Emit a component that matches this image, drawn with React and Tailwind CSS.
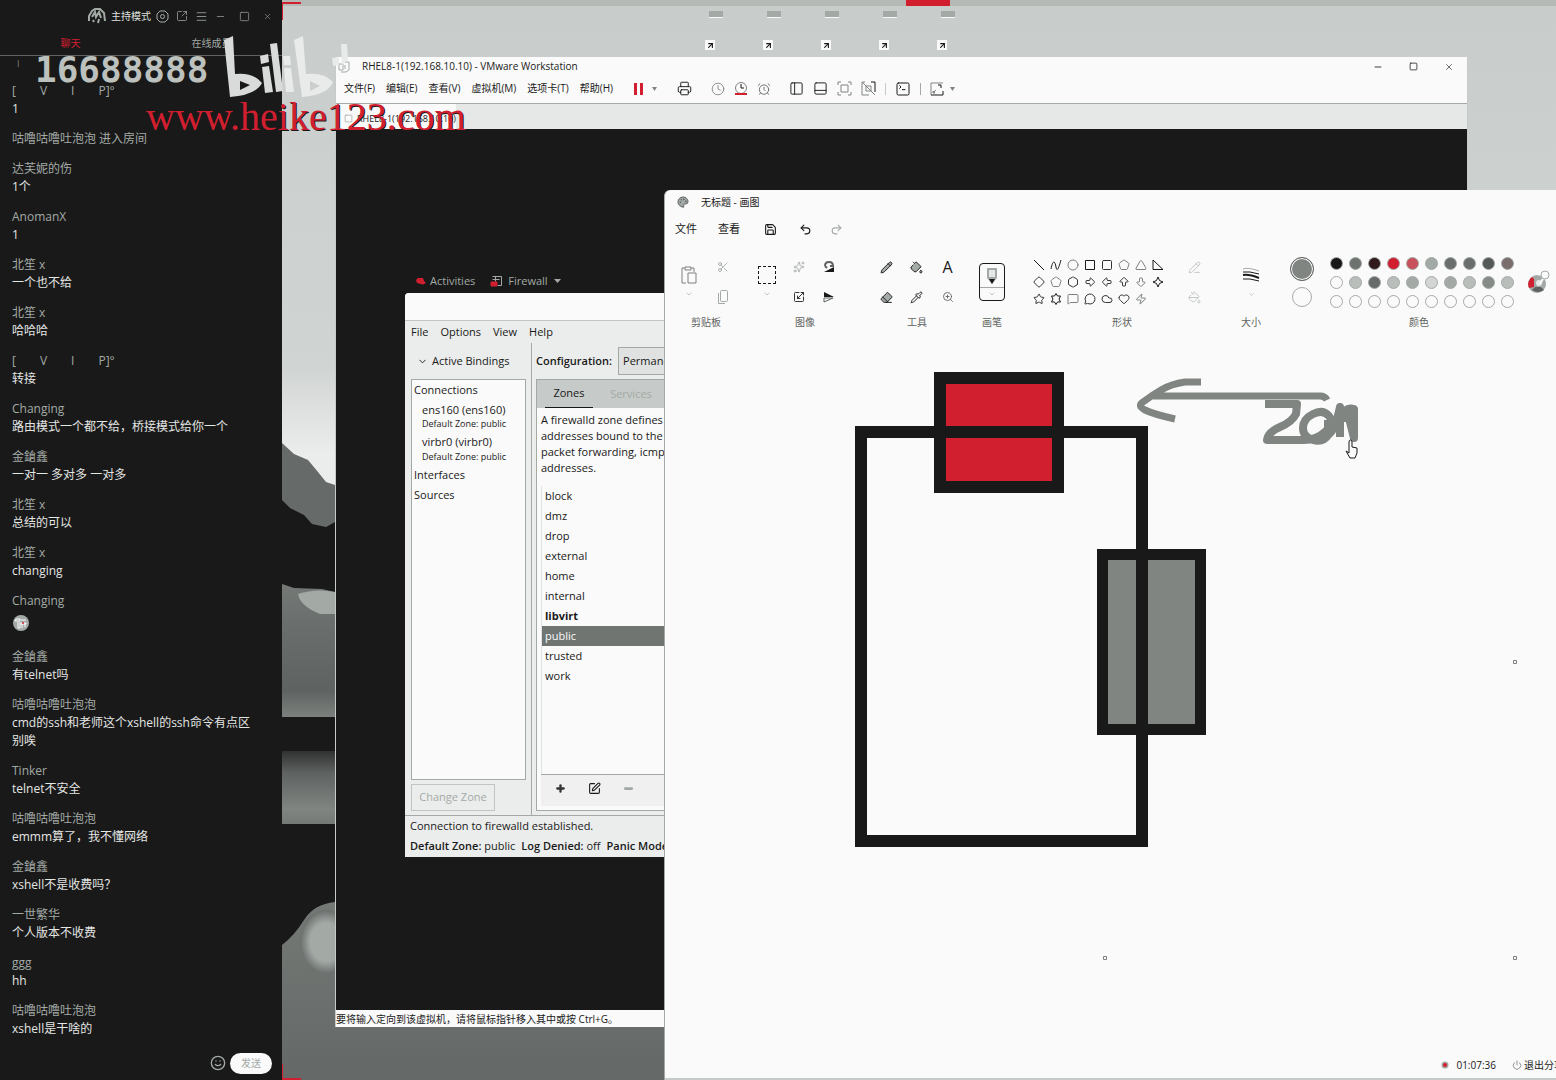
import React from "react";
import {
  SquareArrowOutUpRight, Menu, Minus, Square, X, Smile, Printer, Clock, AlarmClock,
  PanelLeft, PanelBottom, SquareTerminal, ChevronDown, Save, Undo2, Redo2,
  Scissors, Sparkles, Scaling, Pencil, PaintBucket, Eraser,
  Pipette, ZoomIn, Circle, Triangle, Diamond, Pentagon, Hexagon, ArrowBigRight, ArrowBigLeft,
  ArrowBigUp, ArrowBigDown, Star, MessageSquare, MessageCircle, Heart, Zap, Palette, Power,
  PencilLine, Plus, SquarePen, Cloud, ArrowUpRight,
} from "lucide-react";

const messages = [
  { name: "[\u2003\u2003V\u2003\u2003I\u2003\u2003P]°", text: "1" },
  { system: "咕噜咕噜吐泡泡 进入房间" },
  { name: "达芙妮的伤", text: "1个" },
  { name: "AnomanX", text: "1" },
  { name: "北笙 x", text: "一个也不给" },
  { name: "北笙 x", text: "哈哈哈" },
  { name: "[\u2003\u2003V\u2003\u2003I\u2003\u2003P]°", text: "转接" },
  { name: "Changing", text: "路由模式一个都不给，桥接模式给你一个" },
  { name: "金鎗鑫", text: "一对一 多对多 一对多" },
  { name: "北笙 x", text: "总结的可以" },
  { name: "北笙 x", text: "changing" },
  { name: "Changing", emoji: true },
  { name: "金鎗鑫", text: "有telnet吗" },
  { name: "咕噜咕噜吐泡泡", text: "cmd的ssh和老师这个xshell的ssh命令有点区别唉" },
  { name: "Tinker", text: "telnet不安全" },
  { name: "咕噜咕噜吐泡泡", text: "emmm算了，我不懂网络" },
  { name: "金鎗鑫", text: "xshell不是收费吗？" },
  { name: "一世繁华", text: "个人版本不收费" },
  { name: "ggg", text: "hh" },
  { name: "咕噜咕噜吐泡泡", text: "xshell是干啥的" },
];

function Chat() {
  return (
    <aside className="flex w-[282px] shrink-0 flex-col bg-[#191919] text-[#a3aaa6]">
      <header className="flex h-8 shrink-0 items-center gap-[7px] pl-[88px]">
        <svg width="18" height="16" viewBox="0 0 18 16" fill="none" stroke="#a3aaa6" strokeWidth="2">
          <path d="M1 13V8l3-5 3-2 5 0 4 4 1 8M4 9l3-5 1 5 3-5 2 6M5 12l1 2M11 11l-1 4" />
        </svg>
        <span className="-ml-[2px] whitespace-nowrap text-[10px] text-[#dfe1df]">主持模式</span>
        <button aria-label="设置" className="-ml-[2px]">
          <svg width="13" height="13" viewBox="0 0 13 13" fill="none" stroke="#a3aaa6">
            <path d="M4 1h5l3 3v5l-3 3H4L1 9V4z" /><circle cx="6.500" cy="6.500" r="2" />
          </svg>
        </button>
        <button aria-label="弹出"><SquareArrowOutUpRight size={12} strokeWidth={1.5} /></button>
        <button aria-label="菜单"><Menu size={13} strokeWidth={1.5} /></button>
        <button aria-label="最小化"><Minus size={11} strokeWidth={1.5} /></button>
        <button aria-label="最大化" className="ml-[6px]"><Square size={11} strokeWidth={1.5} /></button>
        <button aria-label="关闭" className="ml-[6px]"><X size={9} strokeWidth={1.5} /></button>
      </header>
      <nav className="grid h-6 shrink-0 grid-cols-2 border-b border-[#5e6260] text-[10px]">
        <button className="text-[#d21f30]">聊天</button>
        <button>在线成员</button>
      </nav>
      <div className="flex min-h-0 flex-1 flex-col overflow-hidden pl-3 pr-6 text-xs leading-[18px]">
        <span className="h-[26px] shrink-0 pl-1 text-[8px] leading-3">|</span>
        <ul className="flex flex-col gap-3">
          {messages.map((m, i) => (
            <li key={i}>
              {m.system ? m.system : (
                <>
                  <p className="whitespace-nowrap">{m.name}</p>
                  {m.emoji ? (
                    <div className="flex h-[26px] items-center">
                      <svg width="18" height="16" viewBox="0 0 18 16">
                        <circle cx="9" cy="8" r="8" fill="#a3aaa6" />
                        <path d="M4 4h4v2H3zM9 5h5M5 8h9v1H8v4H6V9M10 9v4M13 9v3" stroke="#fafafa" fill="none" />
                        <circle cx="11" cy="8" r="1" fill="#d21f30" />
                      </svg>
                    </div>
                  ) : <p className="text-[#e4e6e4]">{m.text}</p>}
                </>
              )}
            </li>
          ))}
        </ul>
      </div>
      <footer className="flex h-[34px] shrink-0 items-center justify-end gap-1 pr-[10px]">
        <button aria-label="表情"><Smile size={16} /></button>
        <button className="h-[21px] w-[42px] rounded-full bg-[#fafafa] text-[10px] text-[#a3aaa6]">发送</button>
      </footer>
    </aside>
  );
}

function Wallpaper() {
  return (
    <svg className="absolute inset-0 h-full w-full" viewBox="0 0 1274 1080" preserveAspectRatio="none">
      <defs>
        <linearGradient id="sky" x1="0" y1="0" x2="0" y2="1">
          <stop offset="0" stopColor="#c8ccca" />
          <stop offset="0.34" stopColor="#d0d4d2" />
          <stop offset="0.42" stopColor="#ebedec" />
        </linearGradient>
        <linearGradient id="field" x1="0" y1="0" x2="0" y2="1">
          <stop offset="0" stopColor="#747976" />
          <stop offset="0.3" stopColor="#6a6e6c" />
          <stop offset="0.8" stopColor="#5e6260" />
          <stop offset="1" stopColor="#7c817e" />
        </linearGradient>
        <linearGradient id="band" x1="0" y1="0" x2="0" y2="1">
          <stop offset="0" stopColor="#303231" />
          <stop offset="0.3" stopColor="#5e6260" />
          <stop offset="0.8" stopColor="#808582" />
          <stop offset="1" stopColor="#747976" />
        </linearGradient>
        <radialGradient id="blob">
          <stop offset="0.6" stopColor="#a3aaa6" />
          <stop offset="1" stopColor="#6a6e6c" />
        </radialGradient>
        <linearGradient id="ground" x1="0" y1="0" x2="0" y2="1">
          <stop offset="0" stopColor="#747976" />
          <stop offset="1" stopColor="#646866" />
        </linearGradient>
      </defs>
      <rect width="1274" height="1080" fill="url(#sky)" />
      <path d="M0 443L12 454 26 460 36 472 44 482 53 485V600H0z" fill="#666a68" />
      <path d="M0 500L8 508 22 515 30 524 44 527 53 522V600H0z" fill="#191919" />
      <path d="M0 584L12 588 40 589 53 592V717H0z" fill="url(#field)" />
      <path d="M16 594Q34 588 53 592V614H38Q18 606 16 594z" fill="#a3aaa6" />
      <path d="M0 717H53V751H0z" fill="#191919" />
      <path d="M0 751H53V824H0z" fill="url(#band)" />
      <path d="M0 824H53V950H0z" fill="#191919" />
      <path d="M0 945Q12 936 22 920T53 902V1080H0z" fill="url(#ground)" />
      <ellipse cx="44" cy="942" rx="26" ry="32" fill="url(#blob)" />
      <path d="M53 900H1274V1080H53z" fill="url(#ground)" />
      <rect width="1274" height="6" fill="#b5bab7" />
    </svg>
  );
}

const T = "#191919";
const G = "#a3aaa6";

const vmMenus = ["文件(F)", "编辑(E)", "查看(V)", "虚拟机(M)", "选项卡(T)", "帮助(H)"];
const zones = ["block", "dmz", "drop", "external", "home", "internal", "libvirt", "public", "trusted", "work"];

function Firewall() {
  return (
    <div className="w-[620px] text-[11px] text-[#191919]">
      <div className="flex h-[22px] items-center gap-[15px] pb-[2px] pl-[10px] text-[#a3aaa6]">
        <button className="flex items-center gap-1">
          <svg width="11" height="8" viewBox="0 0 11 8"><path d="M1 3L3 1l5 0 1 3 2 2-3 1.500L2 6z" fill="#d21f30" /></svg>
          Activities
        </button>
        <button className="flex items-center gap-[6px]">
          <svg width="12" height="11" viewBox="0 0 12 11" fill="none" stroke="#a3aaa6">
            <path d="M2.500.500h9v9h-4M2.500 3.500h7M5.500.500v5" /><path d="M1 6h6v4H1z" fill="#d21f30" stroke="#d21f30" />
          </svg>
          Firewall
          <svg width="7" height="4" viewBox="0 0 7 4"><path d="M0 0h7L3.500 4z" fill="#a3aaa6" /></svg>
        </button>
      </div>
      <div className="flex h-[564px] flex-col rounded-t bg-[#ebedec]">
        <div className="h-7 shrink-0 rounded-t border-b border-[#c0c5c2] bg-[#fafafa]" />
        <div className="flex h-[22px] shrink-0 items-center gap-3 pl-[6px]">
          <button>File</button><button>Options</button><button>View</button><button>Help</button>
        </div>
        <div className="flex min-h-0 flex-1">
          <div className="flex w-[127px] shrink-0 flex-col border-r border-[#a3aaa6] pl-[6px] pr-[5px]">
            <button className="flex h-9 shrink-0 items-center gap-1 pl-[6px]"><ChevronDown size={11} />Active Bindings</button>
            <div className="flex-1 border border-[#a3aaa6] bg-[#fafafa] px-[2px]">
              <p className="leading-5">Connections</p>
              <div className="pl-2">
                <p className="pt-[2px] leading-4">ens160 (ens160)</p>
                <p className="text-[9px] leading-3">Default Zone: public</p>
                <p className="pt-[3px] leading-[18px]">virbr0 (virbr0)</p>
                <p className="text-[9px] leading-3">Default Zone: public</p>
              </div>
              <p className="pt-[3px] leading-[18px]">Interfaces</p>
              <p className="leading-[22px]">Sources</p>
            </div>
            <button className="mb-1 mt-1 h-[27px] w-[84px] shrink-0 border border-[#c0c5c2] text-[#a3aaa6]">Change Zone</button>
          </div>
          <div className="flex min-w-0 flex-1 flex-col pl-1">
            <div className="flex h-9 shrink-0 items-center gap-[6px] font-semibold">
              Configuration:
              <button className="h-7 border border-[#a3aaa6] bg-[#dfe2e0] px-1 font-normal">Permanent</button>
            </div>
            <div className="mb-1 flex min-h-0 flex-1 flex-col border border-[#a3aaa6] bg-[#fafafa]">
              <div className="flex h-7 shrink-0 bg-[#c6cac8] pl-2">
                <button className="w-12 border-b border-[#191919]">Zones</button>
                <button className="ml-[14px] w-12 text-[#a3aaa6]">Services</button>
              </div>
              <p className="h-[78px] shrink-0 whitespace-nowrap px-1 pt-1 leading-4">
                A firewalld zone defines the level of trust for network connections, interfaces<br />
                addresses bound to the zone. The zone combines services, ports, protocols<br />
                packet forwarding, icmp filters and rich rules. The zone can be bound to<br />
                addresses.
              </p>
              <ul className="mx-1 min-h-0 flex-1 border-l border-[#dfe2e0]">
                {zones.map((z) => (
                  <li
                    key={z}
                    className={
                      z === "public" ? "h-5 bg-[#707572] px-[3px] leading-5 text-[#fafafa]"
                        : z === "libvirt" ? "h-5 px-[3px] font-bold leading-5" : "h-5 px-[3px] leading-5"
                    }
                  >
                    {z}
                  </li>
                ))}
              </ul>
              <div className="mx-1 mb-1 flex h-8 shrink-0 items-center gap-[22px] border-t border-[#a3aaa6] bg-[#eff0ef] pb-1 pl-[14px]">
                <button aria-label="Add"><Plus size={11} strokeWidth={5} color="#333534" /></button>
                <button aria-label="Edit"><SquarePen size={13} /></button>
                <button aria-label="Remove"><Minus size={11} strokeWidth={6} color={G} /></button>
              </div>
            </div>
          </div>
        </div>
        <div className="h-[42px] shrink-0 whitespace-nowrap border-t border-[#a3aaa6] pl-[5px] leading-5">
          <p>Connection to firewalld established.</p>
          <p className="flex gap-[6px]">
            <span><span className="font-semibold">Default Zone:</span> public</span>
            <span><span className="font-semibold">Log Denied:</span> off</span>
            <span><span className="font-semibold">Panic Mode:</span> disabled</span>
          </p>
        </div>
      </div>
    </div>
  );
}

function VMware() {
  return (
    <section className="absolute bottom-[53px] left-[53px] right-[88px] top-[57px] flex flex-col border-x border-[#c6cac8] bg-[#fafafa] text-[#191919]">
      <div className="flex h-[19px] shrink-0 items-center text-[10px]">
        <svg className="ml-[2px]" width="12" height="12" viewBox="0 0 12 12" fill="none" stroke={G}><path d="M1 3h4v6H1zM5 1h6v8l-3 2-5 0M7 4v4" /></svg>
        <h1 className="ml-3">RHEL8-1(192.168.10.10) - VMware Workstation</h1>
        <div className="ml-auto flex gap-[26px] pr-[13px]">
          <button aria-label="Minimize"><Minus size={10} /></button>
          <button aria-label="Maximize"><Square size={9} /></button>
          <button aria-label="Close"><X size={10} strokeWidth={1.500} /></button>
        </div>
      </div>
      <div className="flex h-[28px] shrink-0 items-center gap-3 border-b border-[#a3aaa6] pb-[2px] pl-2 text-[10px]">
        <nav className="flex gap-[11px] whitespace-nowrap">
          {vmMenus.map((m) => <button key={m}>{m}</button>)}
        </nav>
        <button aria-label="Suspend" className="ml-[9px] flex items-center gap-2">
          <svg width="10" height="12" viewBox="0 0 10 12"><path d="M0 0h3v12H0zM6 0h3v12H6z" fill="#d21f30" /></svg>
          <svg width="5" height="4" viewBox="0 0 5 4"><path d="M0 0h5L2.500 4z" fill="#808582" /></svg>
        </button>
        <div className="ml-2 flex items-center gap-[9px]">
          <button aria-label="Send keys" className="mr-[10px]"><Printer size={15} strokeWidth={1.500} /></button>
          <button aria-label="Take snapshot"><Clock size={14} strokeWidth={1.500} color="#808582" /></button>
          <button aria-label="Revert snapshot">
            <svg width="14" height="15" viewBox="0 0 14 15" fill="none" stroke="#808582"><circle cx="7" cy="7" r="5.500" /><path d="M7 3v4h3" stroke={T} /><path d="M1 13h12" stroke="#d21f30" strokeWidth="2" /></svg>
          </button>
          <button aria-label="Manage snapshots"><AlarmClock size={14} strokeWidth={1.500} color="#5e6260" /></button>
        </div>
        <div className="ml-[6px] flex items-center gap-[9px]">
          <button aria-label="Library"><PanelLeft size={15} strokeWidth={1.500} /></button>
          <button aria-label="Thumbnail bar"><PanelBottom size={15} strokeWidth={1.500} /></button>
          <button aria-label="Full screen">
            <svg width="15" height="15" viewBox="0 0 15 15" fill="none" stroke="#808582"><path d="M1 4V1h3M11 1h3v3M14 11v3h-3M4 14H1v-3M4 4h7v7H4z" /></svg>
          </button>
          <button aria-label="Unity">
            <svg width="15" height="15" viewBox="0 0 15 15" fill="none" stroke="#808582"><path d="M1 4V1h3M1 4v10h7M5 5h5v5H5zM1 1l13 13" /><path d="M10 1h4v10" stroke={T} /></svg>
          </button>
          <span className="h-3 border-l border-[#c6cac8]" />
          <button aria-label="Console"><SquareTerminal size={16} strokeWidth={1.500} /></button>
          <span className="h-3 border-l border-[#a3aaa6]" />
          <button aria-label="Stretch" className="flex items-center gap-[6px]">
            <svg width="14" height="14" viewBox="0 0 14 14" fill="none" stroke="#808582"><path d="M1 13V1h12M3 9l2 2H3zM3 11l3-3" /><path d="M1 13h12V9M8 3h3v3" stroke={T} /></svg>
            <svg width="5" height="4" viewBox="0 0 5 4"><path d="M0 0h5L2.500 4z" fill="#808582" /></svg>
          </button>
        </div>
      </div>
      <div className="flex h-[25px] shrink-0 items-center bg-[#e6e8e7] text-[9px]">
        <button className="flex h-full w-[120px] items-center gap-1 bg-[#fafafa] pl-2 pt-1"><Square size={9} color={G} />RHEL8-1(192.168.10.10)</button>
      </div>
      <div className="min-h-0 flex-1 overflow-hidden bg-[#191919] pl-[69px] pt-[142px]"><Firewall /></div>
      <div className="h-[17px] shrink-0 whitespace-nowrap text-[10px] leading-[18px]">要将输入定向到该虚拟机，请将鼠标指针移入其中或按 Ctrl+G。</div>
    </section>
  );
}

function Group({ label, className, children }) {
  return (
    <div className={className}>
      <div className="flex h-[60px] items-center justify-center">{children}</div>
      <p className="text-center text-[10px] leading-5 text-[#5e6260]">{label}</p>
    </div>
  );
}

function Tool({ icon: Icon, label, color = T, size = 14, fill = "none" }) {
  return (
    <button aria-label={label} className="flex h-[30px] items-center justify-center">
      <Icon size={size} strokeWidth={1.750} color={color} fill={fill} />
    </button>
  );
}

const shapes = [
  null, null, Circle, null, Square, Pentagon, Triangle, null,
  Diamond, Pentagon, Hexagon, ArrowBigRight, ArrowBigLeft, ArrowBigUp, ArrowBigDown, null,
  Star, null, MessageSquare, MessageCircle, Cloud, Heart, Zap,
];

const drawnShapes = {
  0: <path d="M1 1l10 10" />,
  1: <path d="M1 10C3 0 5 2 6 8s3 0 5-7" />,
  3: <path d="M1.500 1.500h9v9h-9z" />,
  7: <path d="M1 1v9.500h10z" />,
  15: <path d="M6 1l1.500 3.500L11 6 7.500 7.500 6 11 4.500 7.500 1 6l3.500-1.500z" />,
  17: <path d="M6 .500l1.500 2.500h3L9 6l1.500 3h-3L6 11.500 4.500 9h-3L3 6 1.500 3h3z" />,
};

function Shape({ i, icon: Icon }) {
  if (!Icon) return <svg width="12" height="12" viewBox="0 0 12 12" fill="none" stroke={T}>{drawnShapes[i]}</svg>;
  const color = [2, 5, 6, 9, 14, 18, 22].includes(i) ? "#7c817e" : "#333534";
  return <Icon size={12} strokeWidth={2} color={color} />;
}

const swatches = [
  "#191919", "#6e7370", "#301a1c", "#d21f30", "#c8525c", "#a3aaa6", "#6a6e6c", "#6a6e6c", "#555957", "#7a6d6c",
  "#fafafa", "#b9beba", "#676b69", "#b9beba", "#a3aaa6", "#d2d5d3", "#a3aaa6", "#b9beba", "#868b88", "#b9beba",
];

function Paint() {
  return (
    <section className="absolute bottom-0 left-[382px] right-0 top-[190px] flex flex-col overflow-hidden rounded-tl-md border-l border-[#a3aaa6] bg-[#fafafa] text-[#191919]">
      <div className="flex h-6 shrink-0 items-center gap-3 pl-3 text-[10px]">
        <Palette size={12} fill={G} color="#5e6260" />
        <h2>无标题 - 画图</h2>
      </div>
      <div className="flex h-[30px] shrink-0 items-center pl-[10px] text-[11px]">
        <button>文件</button>
        <button className="ml-[21px]">查看</button>
        <button aria-label="保存" className="ml-6"><Save size={13} /></button>
        <button aria-label="撤消" className="ml-[22px]"><Undo2 size={13} /></button>
        <button aria-label="重做" className="ml-[18px]"><Redo2 size={13} color={G} /></button>
      </div>
      <div className="flex h-[90px] shrink-0 gap-4 pl-2 pt-2">
        <Group label="剪贴板" className="w-[66px] shrink-0">
          <div className="flex w-full items-center justify-between px-1">
            <button aria-label="粘贴" className="flex w-6 flex-col items-center gap-[6px]">
              <svg width="16" height="18" viewBox="0 0 16 18" fill="none" stroke="#7c817e"><path d="M5 17H1V2h3M10 2h3v4M4 1h6v3H4zM7 7h8v10H7z" /></svg>
              <ChevronDown size={8} color={G} />
            </button>
            <div className="flex w-6 flex-col">
              <Tool icon={Scissors} label="剪切" color={G} size={12} />
              <button aria-label="复制" className="flex h-[30px] items-center justify-center">
                <svg width="10" height="14" viewBox="0 0 10 14" fill="none" stroke={G}><rect x="2.500" y="0.500" width="7" height="11" rx="1" /><path d="M.500 3v10.500H7" /></svg>
              </button>
            </div>
          </div>
        </Group>
        <Group label="图像" className="w-[100px] shrink-0">
          <div className="flex w-full items-center pl-[3px]">
            <button aria-label="选择" className="flex flex-col items-center gap-[6px]">
              <span className="h-[18px] w-[18px] border border-dashed border-[#191919]" /><ChevronDown size={8} color={G} />
            </button>
            <div className="ml-[17px] grid grid-cols-2 gap-x-[18px]">
              <Tool icon={Sparkles} label="删除背景" color={G} size={12} />
              <button aria-label="旋转" className="flex h-[30px] items-center justify-center">
                <svg width="12" height="12" viewBox="0 0 12 12"><path d="M1 11L11 6v5z" fill={T} /><path d="M2 5q0-4 4-4t4 4H7M2 5l2 2" fill="none" stroke="#5e6260" strokeWidth="2" /></svg>
              </button>
              <Tool icon={Scaling} label="调整大小" size={12} />
              <button aria-label="翻转" className="flex h-[30px] items-center justify-center"><svg width="12" height="12" viewBox="0 0 12 12"><path d="M1 1l10 5H1z" fill={T} /><path d="M1 7h9l-9 4z" fill="none" stroke="#5e6260" /></svg></button>
            </div>
          </div>
        </Group>
        <Group label="工具" className="w-[92px] shrink-0">
          <div className="grid w-full grid-cols-3">
            <Tool icon={Pencil} label="铅笔" fill={G} size={13} /><Tool icon={PaintBucket} label="填充" fill={G} size={13} />
            <button aria-label="文本" className="text-center text-base leading-[30px]">A</button>
            <Tool icon={Eraser} label="橡皮擦" fill={G} size={13} /><Tool icon={Pipette} label="取色" size={13} />
            <Tool icon={ZoomIn} label="放大" size={12} color="#5e6260" />
          </div>
        </Group>
        <Group label="画笔" className="w-[26px] shrink-0">
          <button aria-label="画笔" className="flex h-[38px] w-full flex-col items-center rounded border border-[#191919] pt-1">
            <svg width="12" height="17" viewBox="0 0 12 17"><path d="M1 0h10v10l-5 6-5-6z" fill={G} /><path d="M3 2h6v7H3z" fill="#e6e8e7" /><path d="M3 11h6l-3 5z" fill={T} /></svg>
            <span className="mt-[2px] flex w-full justify-center border-t border-[#a3aaa6] pt-[2px]"><ChevronDown size={8} color={G} /></span>
          </button>
        </Group>
        <Group label="形状" className="w-[202px] shrink-0">
          <div className="flex w-full items-center pl-3">
            <div className="grid grid-cols-8 gap-[5px]">
              {shapes.map((s, i) => <button key={i} aria-label={`形状 ${i + 1}`}><Shape i={i} icon={s} /></button>)}
            </div>
            <div className="ml-6 flex flex-col">
              <Tool icon={PencilLine} label="轮廓" color="#c0c5c2" size={13} /><Tool icon={PaintBucket} label="填充" color="#c0c5c2" size={13} />
            </div>
          </div>
        </Group>
        <Group label="大小" className="w-6 shrink-0">
          <button aria-label="大小" className="flex flex-col items-center gap-2">
            <svg width="18" height="16" viewBox="0 0 18 16" fill="none" stroke={T}><path d="M1 2q5-2 16 2" stroke={G} /><path d="M1 5q6-1 16 2" /><path d="M1 8q6-1 16 3" strokeWidth="2" /><path d="M1 12q6-1 16 2" /></svg>
            <ChevronDown size={7} color={G} />
          </button>
        </Group>
        <Group label="颜色" className="w-[280px] shrink-0">
          <div className="flex w-7 flex-col items-center gap-[6px]">
            <button aria-label="颜色 1" className="h-6 w-6 rounded-full border border-[#5e6260] bg-[#808582] ring-1 ring-inset ring-[#fafafa]" />
            <button aria-label="颜色 2" className="h-5 w-5 rounded-full border border-[#a3aaa6]" />
          </div>
          <div className="ml-[14px] grid grid-cols-10 gap-[6px]">
            {Array.from({ length: 30 }, (_, i) => (
              <button key={i} aria-label={`色板 ${i + 1}`} className="h-[13px] w-[13px] rounded-full border border-[#a3aaa6]" style={{ backgroundColor: swatches[i] }} />
            ))}
          </div>
          <button aria-label="编辑颜色" className="ml-[14px]">
            <svg width="22" height="24" viewBox="0 0 22 24">
              <circle cx="9" cy="14" r="9" fill="#a3aaa6" /><path d="M4 7a9 9 0 0 0-3 11l5-1V9z" fill="#d21f30" /><path d="M4 20q6 4 12 0l-3-3H7z" fill="#5e6260" />
              <circle cx="11" cy="13" r="3" fill="#e6e8e7" /><path d="M12 14l4-7" stroke="#fafafa" strokeWidth="2" /><circle cx="17" cy="5" r="4" fill="#fafafa" stroke={G} />
            </svg>
          </button>
        </Group>
      </div>
      <div className="min-h-0 flex-1 overflow-hidden">
        <svg width="892" height="706" viewBox="665 334 892 706" fill="none" role="img" aria-label="画布">
          <path d="M945 384h107v97H945z" fill="#d21f30" />
          <path d="M1108 560h87v164h-87z" fill="#808582" />
          <path d="M861 432h281v409H861z" stroke={T} strokeWidth="12" />
          <path d="M940 378h118v109H940z" stroke={T} strokeWidth="12" />
          <path d="M1102.500 554.500h98v175h-98z" stroke={T} strokeWidth="11" />
          <g stroke="#808582" strokeWidth="8" strokeLinejoin="round">
            <path d="M1201 382h-16q-14 2-24 8t-18 12q-6 4 2 8t30 9M1150 396l170 0q5 0 7 4" strokeWidth="7" />
            <path d="M1265 404h32l-1 10q-4 8-16 13t-13 13h34q14 1 24-8t4-16-16-2-10 14 10 12 16-6 6-16" />
            <path d="M1328 420v14q6 0 12-27v30M1340 422q4-16 14-13v29l-6-24v8" />
          </g>
          <path d="M1349 453v-11q0-2 1.500-2t1.500 2v5l5 1v5l-2 5h-5l-4-7z" fill="#fafafa" stroke={T} />
          <g stroke="#7c817e"><path d="M1103.500 956.500h3v3h-3zM1513.500 956.500h3v3h-3zM1513.500 660.500h3v3h-3z" /></g>
        </svg>
      </div>
      <footer className="flex h-7 shrink-0 items-center justify-end overflow-hidden whitespace-nowrap border-b-2 border-[#c6cac8] text-[10px]">
        <div className="-mr-[8px] flex items-center">
          <svg width="8" height="8" viewBox="0 0 8 8"><circle cx="4" cy="4" r="3.500" fill="#a3aaa6" /><circle cx="4" cy="4" r="2" fill="#d21f30" /></svg>
          <time className="ml-[7px]">01:07:36</time>
          <button className="ml-4 flex items-center gap-[2px]"><Power size={10} color="#7c817e" />退出分享</button>
        </div>
      </footer>
    </section>
  );
}

function Desktop() {
  return (
    <main className="relative min-w-0 flex-1 overflow-hidden">
      <Wallpaper />
      <span className="absolute -left-px top-[2px] h-[18px] w-5 border-l-2 border-t-2 border-[#d21f30]" />
      <span className="absolute left-[624px] top-0 h-[6px] w-11 bg-[#d21f30]" />
      <div className="absolute left-[423px] top-[11px] flex gap-[43px]">
        {[0, 1, 2, 3, 4].map((i) => (
          <button key={i} aria-label={`快捷方式 ${i + 1}`} className="flex w-[15px] flex-col gap-[22px]">
            <span className="ml-1 h-[7px] w-[14px] border-b border-[#fafafa] bg-[#a3aaa6]" />
            <span className="flex h-[10px] w-[10px] items-center justify-center bg-[#fafafa]"><ArrowUpRight size={9} strokeWidth={3} color={T} /></span>
          </button>
        ))}
      </div>
      <VMware />
      <Paint />
      <span className="absolute -left-px bottom-0 h-4 w-5 border-b-2 border-l-2 border-[#d21f30]" />
    </main>
  );
}

function Watermark() {
  return (
    <div className="pointer-events-none absolute left-0 top-0">
      <p className="absolute left-[35px] top-[48px] font-['DejaVu_Sans_Mono',monospace] text-[36px] font-bold leading-[43px] text-[#bcc1be]">16688888</p>
      <svg className="absolute left-[222px] top-[34px]" width="130" height="66" viewBox="222 34 130 66" fill="#d8dbd9" role="img" aria-label="bilibili">
        <path fillRule="evenodd" d="M224 40l9-4 2 38q18-2 27 9-6 12-32 14zM240 81v9l10-5z" />
        <path d="M260 56l8-2 1 8-8 2zM262 67l7-1 4 26-8 1zM270 44l7-1 6 48-7 1z" />
        <g fill="#e9ebea">
          <path d="M283 56l7 0 1 9-7 0zM284 68l7 0 3 24-8 0z" />
          <path fillRule="evenodd" d="M294 40l9-4 3 38q18-2 27 8-5 13-31 15zM310 81v10l10-5z" />
          <path d="M341 44l6 0 1 16-6 5zM332 58l7-1 0 8-6 1z" />
        </g>
      </svg>
      <p className="absolute left-[146px] top-[94px] whitespace-nowrap font-['Liberation_Serif',serif] text-[40px] leading-[46px] text-[#d21f30] [text-shadow:1px_1px_0_#191919]">www.heike123.com</p>
    </div>
  );
}

export default function App() {
  return (
    <div className="relative flex h-screen overflow-hidden bg-[#191919] font-['Open_Sans','Noto_Sans_CJK_SC',sans-serif]">
      <Chat />
      <Desktop />
      <Watermark />
    </div>
  );
}
